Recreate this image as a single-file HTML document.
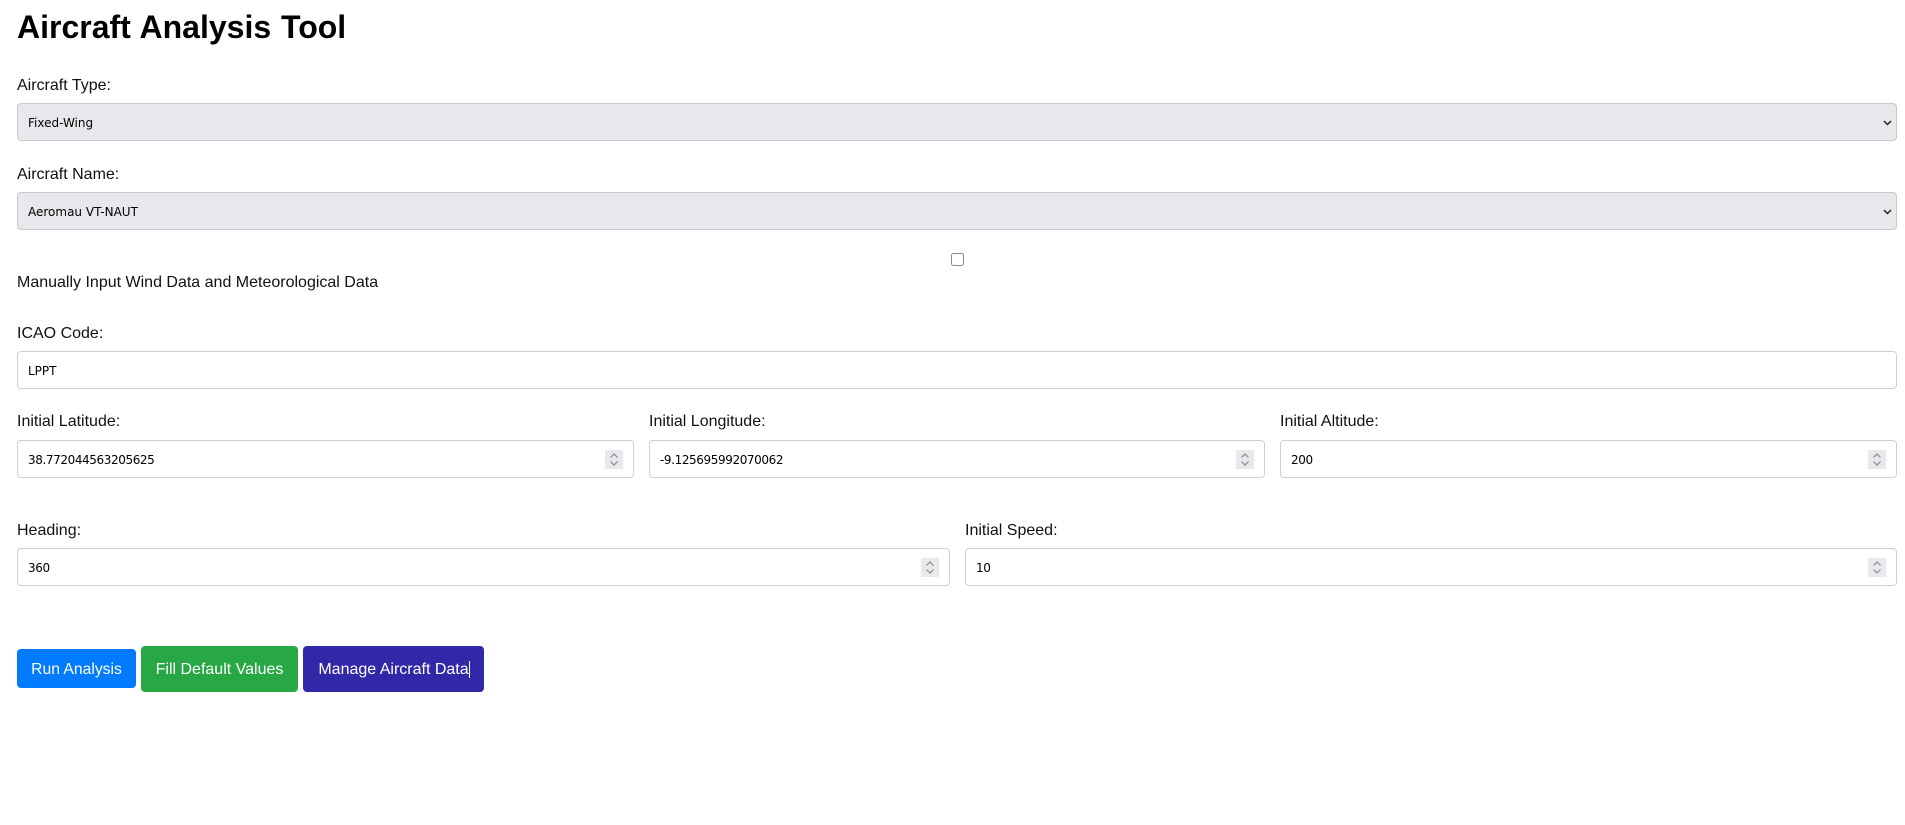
<!DOCTYPE html>
<html lang="en"><head><meta charset="utf-8"><title>Aircraft Analysis Tool</title>
<style>
html,body{margin:0;padding:0;background:#fff;width:1905px;height:825px;overflow:hidden}
body{font-family:"Liberation Sans",Arial,sans-serif;color:#000;position:relative}
h1{position:absolute;left:17px;top:8px;margin:0;font-size:32px;line-height:38px;font-weight:700;word-spacing:1px}
label{position:absolute;font-size:16px;line-height:18px;left:17px;white-space:nowrap;color:#111;transform:translateY(1px)}
.f{position:absolute;box-sizing:border-box;height:38px;border:1px solid #d0d0d0;border-radius:4px;padding:1px 10px 0;margin:0;font:12px "DejaVu Sans",sans-serif;color:#000;background:#fff;outline:0;appearance:none;-webkit-appearance:none}
.n{letter-spacing:-.4px}
select.f{background:#e8e8ec;border-color:#c8c8cc;left:17px;width:1880px}
.chev{position:absolute;left:1883px;width:9px;height:6px}
.sp{position:absolute;width:18px;height:19px;background:#e9e9ed}
.sp svg{display:block}
.b{position:absolute;box-sizing:border-box;border:0;border-radius:4px;color:#fff;font:16px "Liberation Sans",Arial,sans-serif;padding:1px 0 0;text-align:center;margin:0}
.cb{position:absolute;left:951px;top:253px;width:13px;height:13px;box-sizing:border-box;border:1px solid #8a8a8a;border-radius:2.5px;background:#fff}
</style></head><body>
<h1>Aircraft Analysis Tool</h1>

<label style="top:76px">Aircraft Type:</label>
<select class="f" style="top:103px"><option>Fixed-Wing</option></select>
<svg class="chev" style="top:120px" viewBox="0 0 9 6"><path d="M1 1l3.500 3.500L8 1" fill="none" stroke="#222" stroke-width="1.500"/></svg>

<label style="top:165px">Aircraft Name:</label>
<select class="f" style="top:192px"><option>Aeromau VT-NAUT</option></select>
<svg class="chev" style="top:209px" viewBox="0 0 9 6"><path d="M1 1l3.500 3.500L8 1" fill="none" stroke="#222" stroke-width="1.500"/></svg>

<div class="cb"></div>
<label style="top:273px">Manually Input Wind Data and Meteorological Data</label>

<label style="top:324px">ICAO Code:</label>
<input class="f" style="left:17px;top:351px;width:1880px" value="LPPT">

<label style="top:412px;left:17px">Initial Latitude:</label>
<input class="f n" style="left:17px;top:440px;width:617px" value="38.772044563205625">
<div class="sp" style="left:605px;top:450px"><svg width="18" height="19" viewBox="0 0 18 19"><path d="M5.500 7.500L9 4l3.500 3.500M5.500 11.500L9 15l3.500-3.500" fill="none" stroke="#8a8a8a" stroke-width="1.200"/></svg></div>

<label style="top:412px;left:649px">Initial Longitude:</label>
<input class="f n" style="left:649px;top:440px;width:616px" value="-9.125695992070062">
<div class="sp" style="left:1236px;top:450px"><svg width="18" height="19" viewBox="0 0 18 19"><path d="M5.500 7.500L9 4l3.500 3.500M5.500 11.500L9 15l3.500-3.500" fill="none" stroke="#8a8a8a" stroke-width="1.200"/></svg></div>

<label style="top:412px;left:1280px">Initial Altitude:</label>
<input class="f n" style="left:1280px;top:440px;width:617px" value="200">
<div class="sp" style="left:1868px;top:450px"><svg width="18" height="19" viewBox="0 0 18 19"><path d="M5.500 7.500L9 4l3.500 3.500M5.500 11.500L9 15l3.500-3.500" fill="none" stroke="#8a8a8a" stroke-width="1.200"/></svg></div>

<label style="top:521px;left:17px">Heading:</label>
<input class="f n" style="left:17px;top:548px;width:933px" value="360">
<div class="sp" style="left:921px;top:558px"><svg width="18" height="19" viewBox="0 0 18 19"><path d="M5.500 7.500L9 4l3.500 3.500M5.500 11.500L9 15l3.500-3.500" fill="none" stroke="#8a8a8a" stroke-width="1.200"/></svg></div>

<label style="top:521px;left:965px">Initial Speed:</label>
<input class="f n" style="left:965px;top:548px;width:932px" value="10">
<div class="sp" style="left:1868px;top:558px"><svg width="18" height="19" viewBox="0 0 18 19"><path d="M5.500 7.500L9 4l3.500 3.500M5.500 11.500L9 15l3.500-3.500" fill="none" stroke="#8a8a8a" stroke-width="1.200"/></svg></div>

<button class="b" style="left:17px;top:649px;width:119px;height:39px;background:#007bff;font-size:15.700px;padding-top:3px">Run Analysis</button>
<button class="b" style="left:141px;top:646px;width:157px;height:46px;background:#28a745">Fill Default Values</button>
<button class="b" style="left:303px;top:646px;width:181px;height:46px;background:#3128a8">Manage Aircraft Data</button>
<div style="position:absolute;left:469px;top:661px;width:1px;height:17px;background:#fff"></div>
</body></html>
